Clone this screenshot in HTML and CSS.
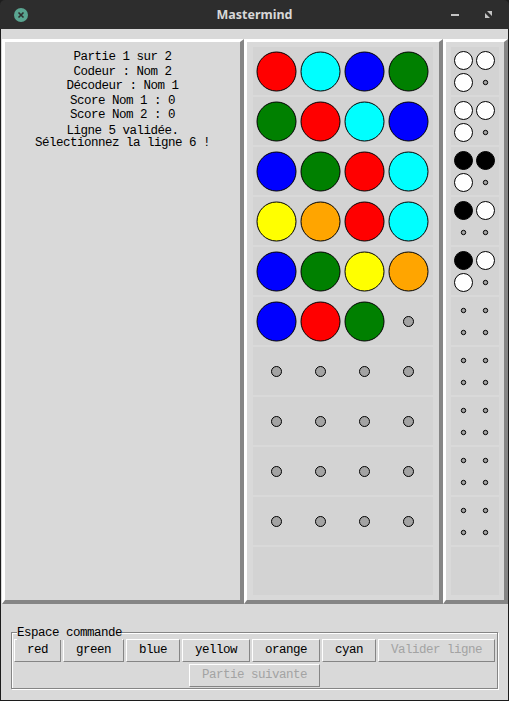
FILE: index.html
```html
<!DOCTYPE html>
<html lang="fr">
<head>
<meta charset="utf-8">
<title>Mastermind</title>
<link rel="stylesheet" href="styles.css">
</head>
<body>
<div class="window">
  <header class="titlebar">
    <svg class="tb-close" viewBox="0 0 14 14" width="14" height="14">
      <circle class="tb-close-bg" cx="7" cy="7" r="7"/>
      <path class="tb-close-x" d="M4.5 4.5L9.5 9.5M9.5 4.5L4.5 9.5"/>
    </svg>
    <span class="tb-title">Mastermind</span>
    <span class="tb-controls">
      <svg class="tb-min" viewBox="0 0 8 2" width="8" height="2"><rect class="tb-icon" x="0" y="0" width="8" height="2"/></svg>
      <svg class="tb-max" viewBox="0 0 7 7" width="7" height="7"><path class="tb-icon" d="M2 0H7V5Z M0 2V7H5Z"/></svg>
    </span>
  </header>
  <main class="client">
    <div class="panes">
      <section class="frame info">
        <p class="line">Partie 1 sur 2</p>
        <p class="line">Codeur : Nom 2</p>
        <p class="line">Décodeur : Nom 1</p>
        <p class="line">Score Nom 1 : 0</p>
        <p class="line">Score Nom 2 : 0</p>
        <p class="msg">Ligne 5 validée.<br>Sélectionnez la ligne 6 !</p>
      </section>
      <section class="frame board">
        <svg class="row" viewBox="0 0 180 48"><circle class="peg red" cx="23.5" cy="24.5" r="19.5"/><circle class="peg cyan" cx="67.5" cy="24.5" r="19.5"/><circle class="peg blue" cx="111.5" cy="24.5" r="19.5"/><circle class="peg green" cx="155.5" cy="24.5" r="19.5"/></svg>
        <svg class="row" viewBox="0 0 180 48"><circle class="peg green" cx="23.5" cy="24.5" r="19.5"/><circle class="peg red" cx="67.5" cy="24.5" r="19.5"/><circle class="peg cyan" cx="111.5" cy="24.5" r="19.5"/><circle class="peg blue" cx="155.5" cy="24.5" r="19.5"/></svg>
        <svg class="row" viewBox="0 0 180 48"><circle class="peg blue" cx="23.5" cy="24.5" r="19.5"/><circle class="peg green" cx="67.5" cy="24.5" r="19.5"/><circle class="peg red" cx="111.5" cy="24.5" r="19.5"/><circle class="peg cyan" cx="155.5" cy="24.5" r="19.5"/></svg>
        <svg class="row" viewBox="0 0 180 48"><circle class="peg yellow" cx="23.5" cy="24.5" r="19.5"/><circle class="peg orange" cx="67.5" cy="24.5" r="19.5"/><circle class="peg red" cx="111.5" cy="24.5" r="19.5"/><circle class="peg cyan" cx="155.5" cy="24.5" r="19.5"/></svg>
        <svg class="row" viewBox="0 0 180 48"><circle class="peg blue" cx="23.5" cy="24.5" r="19.5"/><circle class="peg green" cx="67.5" cy="24.5" r="19.5"/><circle class="peg yellow" cx="111.5" cy="24.5" r="19.5"/><circle class="peg orange" cx="155.5" cy="24.5" r="19.5"/></svg>
        <svg class="row" viewBox="0 0 180 48"><circle class="peg blue" cx="23.5" cy="24.5" r="19.5"/><circle class="peg red" cx="67.5" cy="24.5" r="19.5"/><circle class="peg green" cx="111.5" cy="24.5" r="19.5"/><circle class="hole" cx="155.5" cy="24.5" r="5"/></svg>
        <svg class="row" viewBox="0 0 180 48"><circle class="hole" cx="23.5" cy="24.5" r="5"/><circle class="hole" cx="67.5" cy="24.5" r="5"/><circle class="hole" cx="111.5" cy="24.5" r="5"/><circle class="hole" cx="155.5" cy="24.5" r="5"/></svg>
        <svg class="row" viewBox="0 0 180 48"><circle class="hole" cx="23.5" cy="24.5" r="5"/><circle class="hole" cx="67.5" cy="24.5" r="5"/><circle class="hole" cx="111.5" cy="24.5" r="5"/><circle class="hole" cx="155.5" cy="24.5" r="5"/></svg>
        <svg class="row" viewBox="0 0 180 48"><circle class="hole" cx="23.5" cy="24.5" r="5"/><circle class="hole" cx="67.5" cy="24.5" r="5"/><circle class="hole" cx="111.5" cy="24.5" r="5"/><circle class="hole" cx="155.5" cy="24.5" r="5"/></svg>
        <svg class="row" viewBox="0 0 180 48"><circle class="hole" cx="23.5" cy="24.5" r="5"/><circle class="hole" cx="67.5" cy="24.5" r="5"/><circle class="hole" cx="111.5" cy="24.5" r="5"/><circle class="hole" cx="155.5" cy="24.5" r="5"/></svg>
        <svg class="row" viewBox="0 0 180 48"></svg>
      </section>
      <section class="frame hints">
        <svg class="hint" viewBox="0 0 48 48"><circle class="peg white" cx="12.5" cy="13.5" r="9"/><circle class="peg white" cx="34.5" cy="13.5" r="9"/><circle class="peg white" cx="12.5" cy="35.5" r="9"/><circle class="dot" cx="34.5" cy="35.5" r="2.2"/></svg>
        <svg class="hint" viewBox="0 0 48 48"><circle class="peg white" cx="12.5" cy="13.5" r="9"/><circle class="peg white" cx="34.5" cy="13.5" r="9"/><circle class="peg white" cx="12.5" cy="35.5" r="9"/><circle class="dot" cx="34.5" cy="35.5" r="2.2"/></svg>
        <svg class="hint" viewBox="0 0 48 48"><circle class="peg black" cx="12.5" cy="13.5" r="9"/><circle class="peg black" cx="34.5" cy="13.5" r="9"/><circle class="peg white" cx="12.5" cy="35.5" r="9"/><circle class="dot" cx="34.5" cy="35.5" r="2.2"/></svg>
        <svg class="hint" viewBox="0 0 48 48"><circle class="peg black" cx="12.5" cy="13.5" r="9"/><circle class="peg white" cx="34.5" cy="13.5" r="9"/><circle class="dot" cx="12.5" cy="35.5" r="2.2"/><circle class="dot" cx="34.5" cy="35.5" r="2.2"/></svg>
        <svg class="hint" viewBox="0 0 48 48"><circle class="peg black" cx="12.5" cy="13.5" r="9"/><circle class="peg white" cx="34.5" cy="13.5" r="9"/><circle class="peg white" cx="12.5" cy="35.5" r="9"/><circle class="dot" cx="34.5" cy="35.5" r="2.2"/></svg>
        <svg class="hint" viewBox="0 0 48 48"><circle class="dot" cx="12.5" cy="13.5" r="2.2"/><circle class="dot" cx="34.5" cy="13.5" r="2.2"/><circle class="dot" cx="12.5" cy="35.5" r="2.2"/><circle class="dot" cx="34.5" cy="35.5" r="2.2"/></svg>
        <svg class="hint" viewBox="0 0 48 48"><circle class="dot" cx="12.5" cy="13.5" r="2.2"/><circle class="dot" cx="34.5" cy="13.5" r="2.2"/><circle class="dot" cx="12.5" cy="35.5" r="2.2"/><circle class="dot" cx="34.5" cy="35.5" r="2.2"/></svg>
        <svg class="hint" viewBox="0 0 48 48"><circle class="dot" cx="12.5" cy="13.5" r="2.2"/><circle class="dot" cx="34.5" cy="13.5" r="2.2"/><circle class="dot" cx="12.5" cy="35.5" r="2.2"/><circle class="dot" cx="34.5" cy="35.5" r="2.2"/></svg>
        <svg class="hint" viewBox="0 0 48 48"><circle class="dot" cx="12.5" cy="13.5" r="2.2"/><circle class="dot" cx="34.5" cy="13.5" r="2.2"/><circle class="dot" cx="12.5" cy="35.5" r="2.2"/><circle class="dot" cx="34.5" cy="35.5" r="2.2"/></svg>
        <svg class="hint" viewBox="0 0 48 48"><circle class="dot" cx="12.5" cy="13.5" r="2.2"/><circle class="dot" cx="34.5" cy="13.5" r="2.2"/><circle class="dot" cx="12.5" cy="35.5" r="2.2"/><circle class="dot" cx="34.5" cy="35.5" r="2.2"/></svg>
        <svg class="hint" viewBox="0 0 48 48"></svg>
      </section>
    </div>
    <div class="group">
      <span class="group-label">Espace commande</span>
      <div class="btn-row">
        <button class="btn" type="button">red</button>
        <button class="btn" type="button">green</button>
        <button class="btn" type="button">blue</button>
        <button class="btn" type="button">yellow</button>
        <button class="btn" type="button">orange</button>
        <button class="btn" type="button">cyan</button>
        <button class="btn" type="button" disabled>Valider ligne</button>
      </div>
      <div class="btn-row">
        <button class="btn" type="button" disabled>Partie suivante</button>
      </div>
    </div>
  </main>
</div>
</body>
</html>
```

FILE: styles.css
```css
* {
  box-sizing: border-box;
  margin: 0;
  padding: 0;
}

html, body {
  width: 509px;
  height: 701px;
  overflow: hidden;
  background: #1e1e1e;
}

.window {
  width: 509px;
  height: 701px;
  display: flex;
  flex-direction: column;
}

.titlebar {
  height: 29px;
  flex: none;
  background: #2d2d2d;
  border-radius: 5px 5px 0 0;
  display: grid;
  grid-template-columns: 1fr auto 1fr;
  align-items: center;
}

.tb-close {
  display: block;
  justify-self: start;
  margin-left: 14px;
}

.tb-close-bg {
  fill: #5aa591;
}

.tb-close-x {
  stroke: #2d2d2d;
  stroke-width: 1.6;
  fill: none;
}

.tb-title {
  font: bold 12.5px "Noto Sans", "DejaVu Sans", sans-serif;
  color: #d8d8d8;
  line-height: 29px;
}

.tb-controls {
  justify-self: end;
  display: flex;
  align-items: center;
  gap: 26px;
  margin-right: 17px;
}

.tb-controls svg {
  display: block;
}

.tb-icon {
  fill: #c4c4c4;
}

.client {
  flex: 1;
  background: #d9d9d9;
  border: 1px solid #1c1c1c;
  border-top: 0;
  padding: 10px 0 0 1px;
  display: flex;
  flex-direction: column;
}

.panes {
  display: flex;
  height: 565px;
  flex: none;
}

.frame {
  border-style: solid;
  border-width: 3px 4px 4px 3px;
  border-color: #ffffff #858585 #858585 #ffffff;
  background: #d9d9d9;
}

.info {
  width: 242px;
  padding-top: 8px;
  text-align: center;
  font: 12.5px "Liberation Mono", monospace;
  letter-spacing: -0.5px;
  color: #000;
}

.line {
  line-height: 14.5px;
}

.msg {
  line-height: 12px;
  margin-top: 2px;
}

.board {
  width: 199px;
  padding: 5px 6px;
  display: flex;
  flex-direction: column;
  gap: 2px;
}

.hints {
  width: 65px;
  padding: 5px;
  display: flex;
  flex-direction: column;
  gap: 2px;
}

.row {
  display: block;
  width: 180px;
  height: 48px;
  background: #d3d3d3;
  flex: none;
}

.hint {
  display: block;
  width: 48px;
  height: 48px;
  background: #d3d3d3;
  flex: none;
}

.peg {
  stroke: #000;
  stroke-width: 1;
}

.hole, .dot {
  fill: #a3a3a3;
  stroke: #000;
  stroke-width: 1;
}

.red { fill: #ff0000; }
.cyan { fill: #00ffff; }
.blue { fill: #0000ff; }
.green { fill: #008000; }
.yellow { fill: #ffff00; }
.orange { fill: #ffa500; }
.white { fill: #ffffff; }
.black { fill: #000000; }

.group {
  position: relative;
  align-self: flex-start;
  margin: 28px 0 0 9px;
  width: 487px;
  border: 1px solid #858585;
  box-shadow: inset 1px 1px 0 #ffffff, 1px 1px 0 #ffffff;
  padding: 6px 0 1px;
  display: flex;
  flex-direction: column;
  align-items: center;
  gap: 2px;
  font: 12.5px "Liberation Mono", monospace;
  letter-spacing: -0.5px;
  color: #000;
}

.group-label {
  position: absolute;
  top: -6px;
  left: 5px;
  line-height: 13px;
  background: #d9d9d9;
}

.btn-row {
  display: flex;
  gap: 2px;
}

.btn {
  appearance: none;
  height: 23px;
  padding: 0 12px;
  border: 1px solid;
  border-color: #ffffff #858585 #858585 #ffffff;
  border-radius: 0;
  background: #d9d9d9;
  font: inherit;
  letter-spacing: inherit;
  line-height: 21px;
  color: #000;
}

.btn:disabled {
  color: #a3a3a3;
}
```
